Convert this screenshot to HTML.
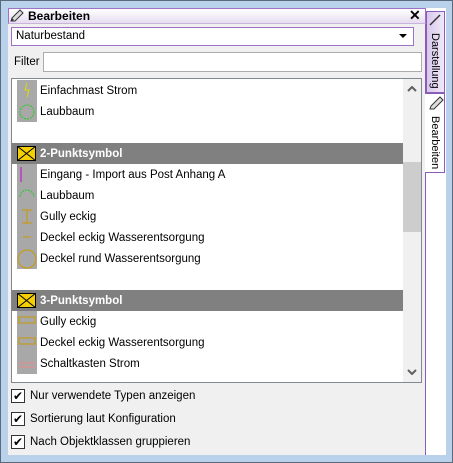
<!DOCTYPE html><html><head><style>
*{box-sizing:border-box}
body{margin:0;width:453px;height:463px;background:#b9d1ea;font-family:"Liberation Sans",sans-serif;font-size:11.5px;position:relative;overflow:hidden}
.a{position:absolute}
.outer{left:0;top:0;width:453px;height:463px;border:1px solid #5a6a7a}
.panel{left:8px;top:8px;width:418px;height:447px;background:#f0f0f0}
.title{left:8px;top:8px;width:418px;height:16px;background:linear-gradient(#fff,#e6dcf0);border:1px solid #a070c8;border-bottom:1px solid #c8b4dc;font-weight:bold;font-size:12px;line-height:14px;padding-left:19px}
.combo{left:11px;top:27px;width:403px;height:19px;background:#fff;border:1px solid #a070c8;padding-left:4px;line-height:17px}
.inp{left:43px;top:52px;width:379px;height:20px;background:#fff;border:1px solid #acacac}
.list{left:11px;top:78px;width:411px;height:305px;background:#fff;border:1px solid #828790}
.sb{left:403px;top:79px;width:18px;height:303px;background:#f0f0f0}
.row{position:absolute;left:17px;height:21px;line-height:23px;width:380px}
.ic{position:absolute;left:0;top:0;width:20px;height:21px;background:#a8a8a8}
.row span{position:absolute;left:23px}
.hdr{position:absolute;left:12px;width:391px;height:21px;background:#808080;color:#fff;font-weight:bold;line-height:22px}
.hdr span{position:absolute;left:28px}
.chk{position:absolute;left:11px;width:14px;height:14px;border:1px solid #333;background:#fff;font-size:12px;line-height:12px;text-align:center}
.cl{position:absolute;left:30px}
.rs{left:426px;top:8px;width:20px;height:447px;background:#fff}
</style></head><body>
<div class="a outer"></div>
<div class="a panel"></div>
<div class="a rs"></div>
<div class="a" style="left:425px;top:24px;width:1px;height:431px;background:#8a5cb8"></div>
<div class="a title">Bearbeiten</div>
<svg class="a" style="left:9px;top:9px" width="16" height="14"><path d="M2 12 L3 9 L11 1 L14 4 L6 12 Z" fill="#ddd" stroke="#333"/><path d="M2 12 L3 9 L5 11Z" fill="#333"/></svg>
<div class="a" style="left:409px;top:7px;font-weight:bold;font-size:14px">✕</div>
<div class="a combo">Naturbestand</div>
<svg class="a" style="left:399px;top:34px" width="9" height="5"><path d="M0 0H8L4 4Z" fill="#000"/></svg>
<div class="a" style="left:14px;top:56px">Filter</div>
<div class="a inp"></div>
<div class="a list"></div>
<div class="a sb"></div>
<div class="a" style="left:403px;top:162px;width:18px;height:70px;background:#cdcdcd"></div>
<svg class="a" style="left:407px;top:86px" width="10" height="6"><path d="M1 5L5 1L9 5" stroke="#606060" stroke-width="2" fill="none"/></svg>
<svg class="a" style="left:407px;top:369px" width="10" height="6"><path d="M1 1L5 5L9 1" stroke="#606060" stroke-width="2" fill="none"/></svg>

<div class="row" style="top:80px"><div class="ic"><svg width="20" height="21"><path d="M10 3L8 10L12 10L10 17" stroke="#dd0" fill="none"/></svg></div><span>Einfachmast Strom</span></div>
<div class="row" style="top:101px"><div class="ic"><svg width="20" height="21"><circle cx="10" cy="11" r="7" fill="none" stroke="#2c2" stroke-dasharray="2 1"/></svg></div><span>Laubbaum</span></div>
<div class="hdr" style="top:143px"><svg style="position:absolute;left:5px;top:3px" width="19" height="15"><rect x="0.5" y="0.5" width="18" height="14" fill="#f5d000" stroke="#000"/><path d="M0 0L19 15M19 0L0 15" stroke="#000"/></svg><span>2-Punktsymbol</span></div>
<div class="row" style="top:164px"><div class="ic"><svg width="20" height="21"><path d="M4 3V18" stroke="#c0c"/></svg></div><span>Eingang - Import aus Post Anhang A</span></div>
<div class="row" style="top:185px"><div class="ic"><svg width="20" height="21"><path d="M3 12A7 7 0 0 1 17 12" stroke="#2c2" fill="none" stroke-dasharray="2 1"/></svg></div><span>Laubbaum</span></div>
<div class="row" style="top:206px"><div class="ic"><svg width="20" height="21"><path d="M5 4H15M10 4V17M5 17H15" stroke="#c90" fill="none"/></svg></div><span>Gully eckig</span></div>
<div class="row" style="top:227px"><div class="ic"><svg width="20" height="21"><path d="M6 10H14" stroke="#c90"/></svg></div><span>Deckel eckig Wasserentsorgung</span></div>
<div class="row" style="top:248px"><div class="ic"><svg width="20" height="21"><circle cx="10" cy="11" r="9" stroke="#c90" fill="none"/></svg></div><span>Deckel rund Wasserentsorgung</span></div>
<div class="hdr" style="top:290px"><svg style="position:absolute;left:5px;top:3px" width="19" height="15"><rect x="0.5" y="0.5" width="18" height="14" fill="#f5d000" stroke="#000"/><path d="M0 0L19 15M19 0L0 15" stroke="#000"/></svg><span>3-Punktsymbol</span></div>
<div class="row" style="top:311px"><div class="ic"><svg width="20" height="21"><rect x="2" y="6" width="16" height="6" stroke="#c90" fill="none"/></svg></div><span>Gully eckig</span></div>
<div class="row" style="top:332px"><div class="ic"><svg width="20" height="21"><rect x="2" y="6" width="16" height="6" stroke="#c90" fill="none"/></svg></div><span>Deckel eckig Wasserentsorgung</span></div>
<div class="row" style="top:353px"><div class="ic"><svg width="20" height="21"><path d="M2 10H18M2 14H18" stroke="#e88"/></svg></div><span>Schaltkasten Strom</span></div>

<div class="chk" style="top:389px">✔</div><div class="cl" style="top:390px">Nur verwendete Typen anzeigen</div>
<div class="chk" style="top:412px">✔</div><div class="cl" style="top:413px">Sortierung laut Konfiguration</div>
<div class="chk" style="top:435px">✔</div><div class="cl" style="top:436px">Nach Objektklassen gruppieren</div>

<div class="a" style="left:426px;top:11px;width:19px;height:82px;background:linear-gradient(90deg,#d8c8ec,#f0e8f8);border:1px solid #8a5cb8"></div>
<div class="a" style="left:429px;top:33px;writing-mode:vertical-rl;font-size:11px">Darstellung</div>
<svg class="a" style="left:429px;top:14px" width="12" height="12"><path d="M1 11L11 1" stroke="#333" stroke-width="1.5"/></svg>
<div class="a" style="left:425px;top:93px;width:20px;height:80px;background:#fff;border:1px solid #8a5cb8;border-left:none"></div>
<svg class="a" style="left:428px;top:95px" width="16" height="16"><path d="M2 14 L3 11 L12 2 L15 5 L6 14 Z" fill="#ddd" stroke="#333"/></svg>
<div class="a" style="left:429px;top:116px;writing-mode:vertical-rl;font-size:11px">Bearbeiten</div>
</body></html>
